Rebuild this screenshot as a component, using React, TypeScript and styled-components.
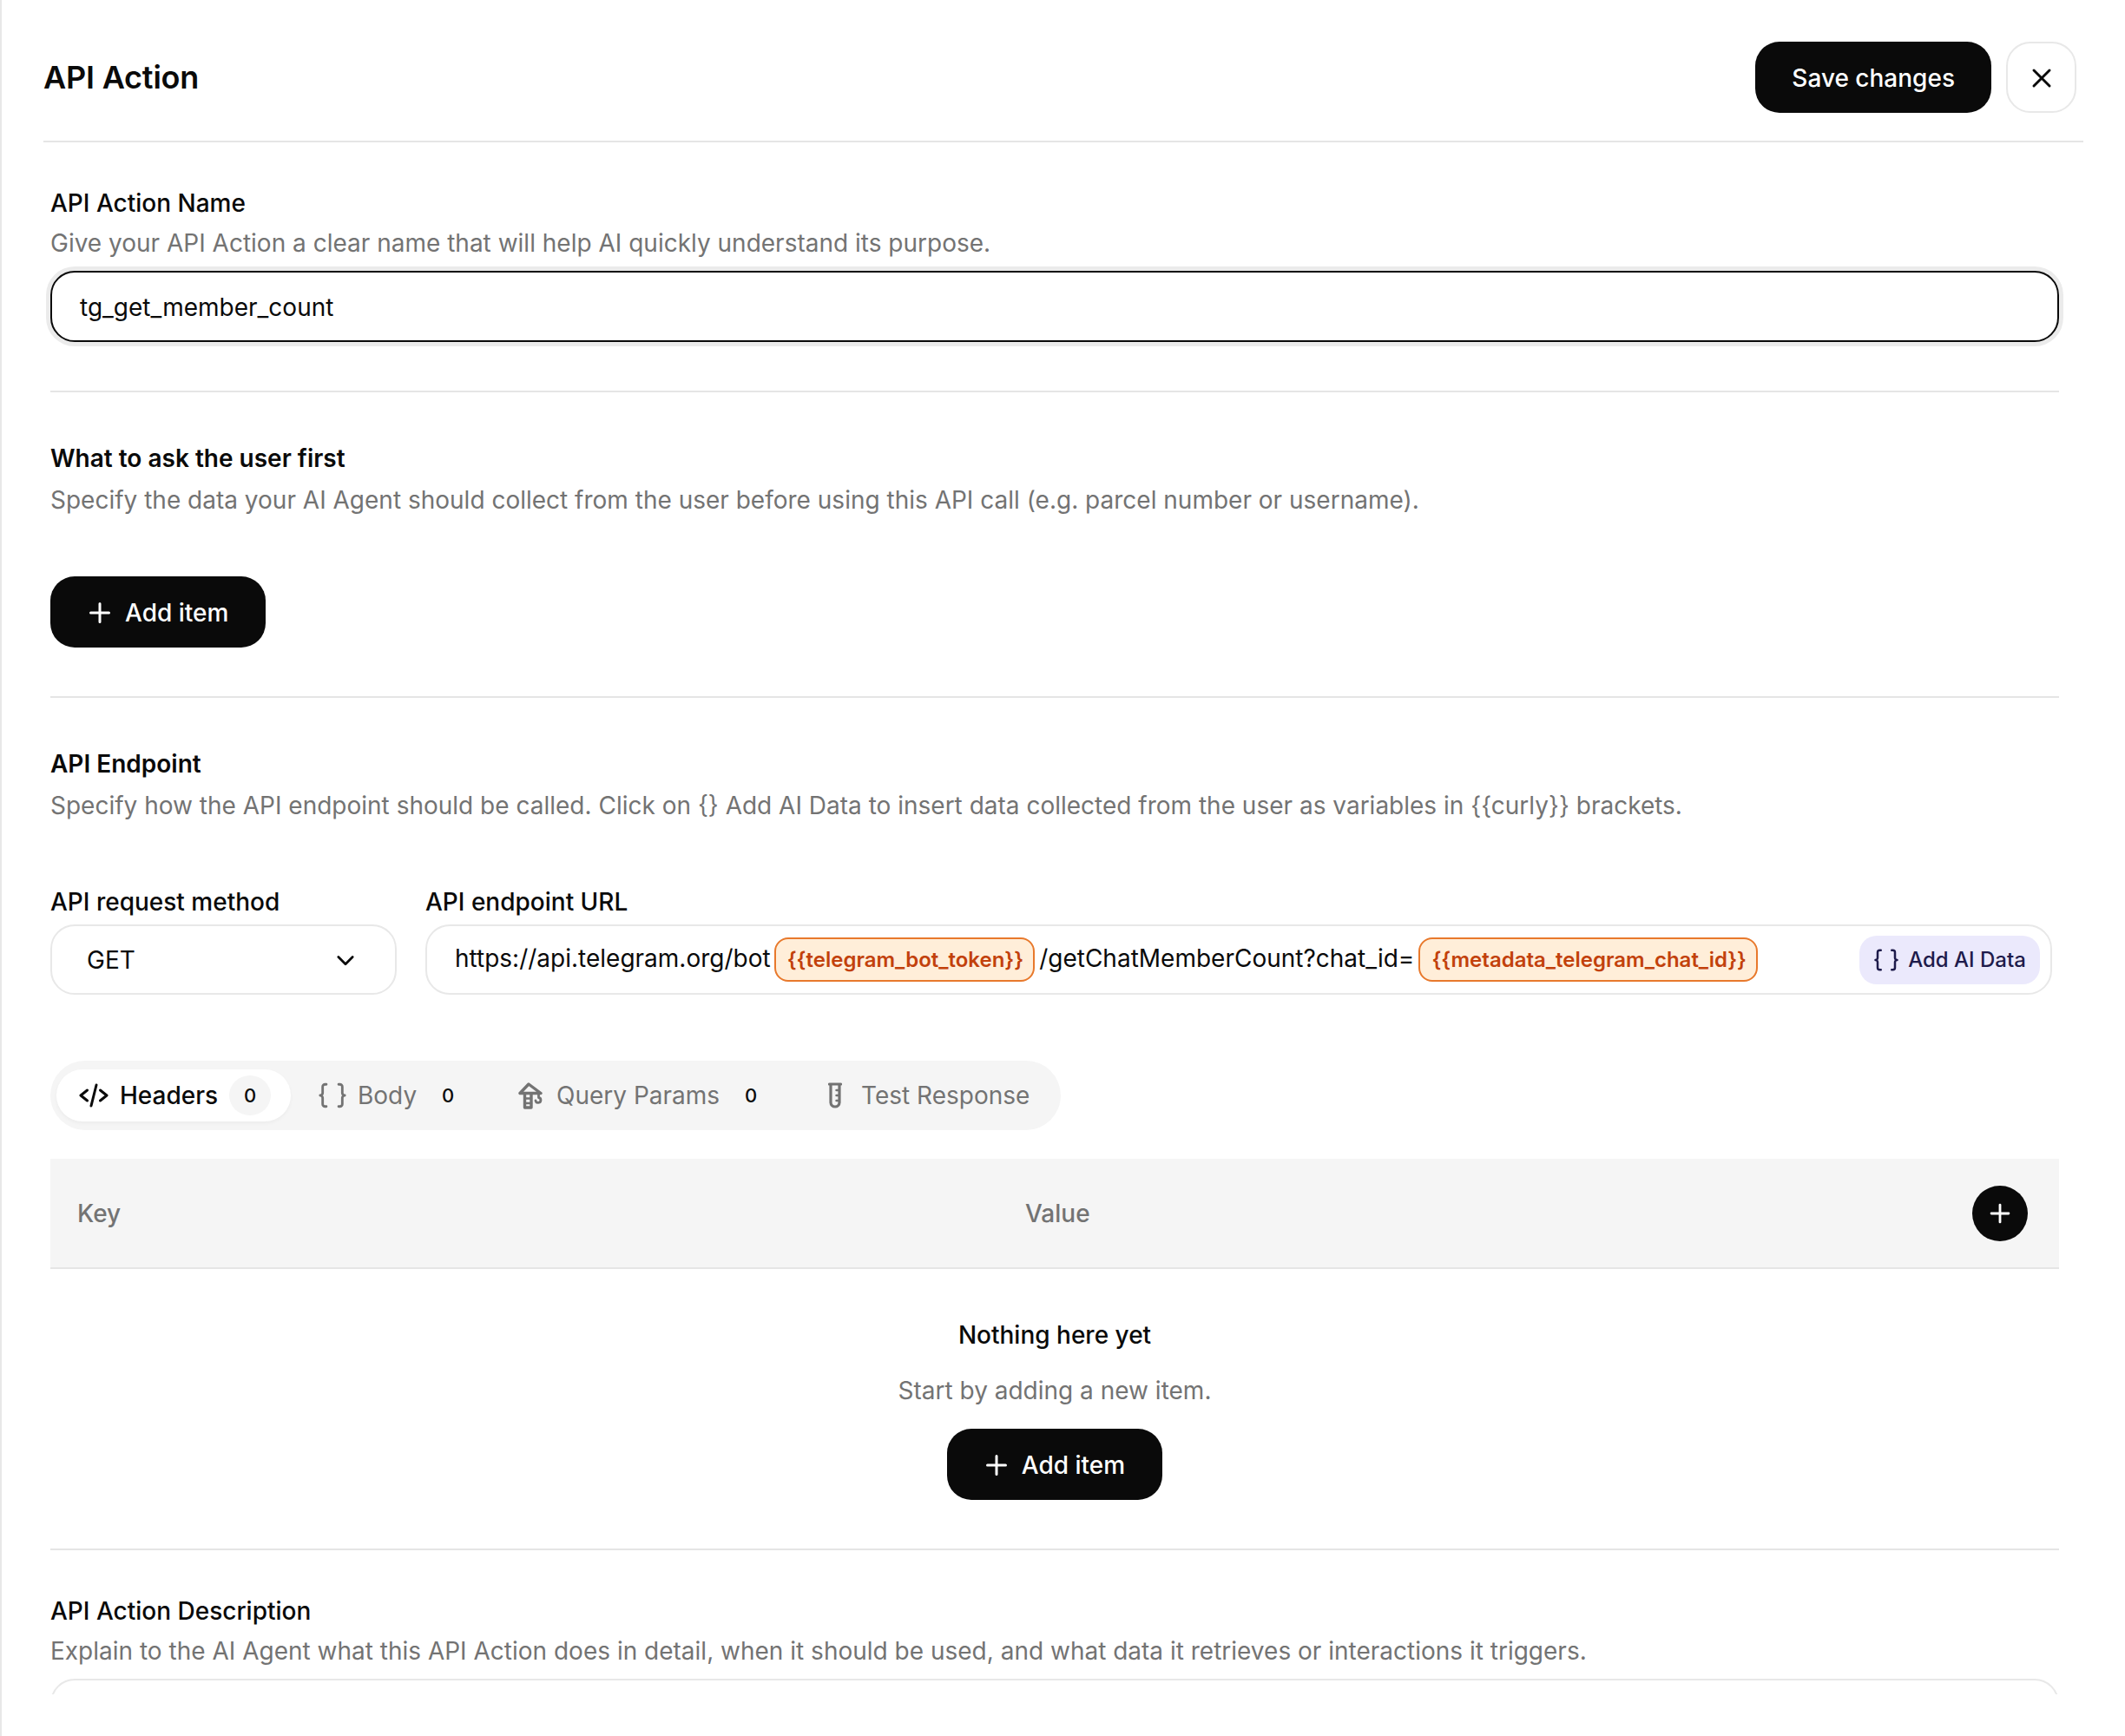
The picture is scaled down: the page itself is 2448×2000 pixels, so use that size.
import React from "react";
import styled, { createGlobalStyle } from "styled-components";

const Global = createGlobalStyle`
  html, body { margin: 0; padding: 0; background: #fff; }
  body { font-family: Inter, "Liberation Sans", sans-serif; color: #0a0a0a; -webkit-font-smoothing: antialiased; }
  * { box-sizing: border-box; }
`;

const Panel = styled.div`
  height: 2000px;
  border-left: 2px solid #e8e8e8;
  padding-right: 48px;
  padding-left: 48px;
  background: #fff;
`;

const Header = styled.header`
  height: 164px;
  padding: 48px 8px 0 0;
  display: flex;
  align-items: flex-start;
  justify-content: space-between;
  border-bottom: 2px solid #e5e5e5;
`;

const Title = styled.h1`
  margin: 0;
  height: 82px;
  line-height: 82px;
  font-size: 36px;
  font-weight: 600;
  letter-spacing: -0.2px;
`;

const Actions = styled.div`
  display: flex;
  gap: 17px;
`;

const PrimaryButton = styled.button`
  height: 82px;
  padding: 2px 42px 0;
  display: inline-flex;
  align-items: center;
  border: 0;
  border-radius: 28px;
  background: #0a0a0a;
  color: #fff;
  font: 500 28px Inter, sans-serif;
`;

const AddButton = styled(PrimaryButton)`
  padding: 2px 43px 0 39px;
  gap: 11px;
`;

const CloseButton = styled.button`
  width: 81px;
  height: 82px;
  display: flex;
  align-items: center;
  justify-content: center;
  border: 2px solid #e8e8e8;
  border-radius: 28px;
  background: #fff;
  color: #0a0a0a;
  padding: 2px 0 0;
`;

const Scroll = styled.main`
  height: 1788px;
  overflow: hidden;
  padding: 0 28px 0 8px;
`;

const Section = styled.section<{ $last?: boolean; $h: number; $pt: number }>`
  border-bottom: ${(p) => (p.$last ? "0" : "2px solid #e5e5e5")};
  height: ${(p) => p.$h}px;
  padding-top: ${(p) => p.$pt}px;
`;

const FieldLabel = styled.div`
  font-size: 28px;
  line-height: 46px;
  font-weight: 500;
  color: #0a0a0a;
`;

const StrongLabel = styled(FieldLabel)`
  font-weight: 600;
`;

const Hint = styled.div`
  font-size: 28px;
  line-height: 46px;
  font-weight: 400;
  color: #737373;
`;

const StrongHint = styled(Hint)`
  margin-top: 2px;
`;

const NameInput = styled.div`
  height: 82px;
  margin-top: 9px;
  display: flex;
  align-items: center;
  padding: 2px 32px 0;
  border: 2.5px solid #0a0a0a;
  border-radius: 28px;
  box-shadow: 0 0 0 5px #ebebeb;
  font-size: 28px;
  background: #fff;
`;

const ButtonRow = styled.div`
  margin-top: 65px;
`;

const EndpointRow = styled.div`
  display: flex;
  gap: 33px;
  margin-top: 66px;
`;

const MethodColumn = styled.div`
  width: 399px;
  flex: none;
`;

const UrlColumn = styled.div`
  width: 1874px;
  flex: none;
`;

const SmallLabel = styled(FieldLabel)`
  line-height: 44px;
  margin-bottom: 4px;
`;

const Select = styled.div`
  height: 81px;
  display: flex;
  align-items: center;
  justify-content: space-between;
  padding: 0 43px 0 40px;
  border: 2px solid #e8e8e8;
  border-radius: 28px;
  font-size: 28px;
  background: #fff;
`;

const UrlField = styled.div`
  height: 81px;
  display: flex;
  align-items: center;
  padding: 0 12px 0 32px;
  border: 2px solid #e8e8e8;
  border-radius: 28px;
  font-size: 28px;
  line-height: 1;
  background: #fff;
`;

const UrlText = styled.span`
  margin-top: -4px;
  white-space: nowrap;
`;

const Chip = styled.span<{ $left: number; $right: number }>`
  height: 51px;
  display: inline-flex;
  align-items: center;
  padding: 0 11px 0 13px;
  margin: 0 ${(p) => p.$right}px 0 ${(p) => p.$left}px;
  border: 2.5px solid #e8792c;
  border-radius: 16px;
  background: #ffeed9;
  color: #c2410c;
  font-size: 24px;
  font-weight: 600;
  white-space: nowrap;
`;

const AiButton = styled.button`
  margin-left: auto;
  height: 56px;
  width: 208px;
  display: inline-flex;
  align-items: center;
  justify-content: center;
  gap: 10px;
  border: 0;
  padding: 0;
  border-radius: 20px;
  background: #ebe9fc;
  color: #1e1b4b;
  font: 500 24px Inter, sans-serif;
  white-space: nowrap;
`;

const TabBar = styled.div`
  width: 1164px;
  height: 80px;
  margin-top: 76px;
  padding: 10px 7px;
  display: flex;
  align-items: center;
  border-radius: 40px;
  background: #f5f5f5;
`;

const Tab = styled.div<{ $active?: boolean; $w: number; $pl: number }>`
  width: ${(p) => p.$w}px;
  height: 60px;
  flex: none;
  display: flex;
  align-items: center;
  padding-left: ${(p) => p.$pl}px;
  border-radius: 30px;
  font-size: 28px;
  font-weight: ${(p) => (p.$active ? 500 : 400)};
  color: ${(p) => (p.$active ? "#0a0a0a" : "#737373")};
  background: ${(p) => (p.$active ? "#fff" : "transparent")};
  box-shadow: ${(p) => (p.$active ? "0 2px 4px rgba(0,0,0,.04)" : "none")};
`;

const TabIcon = styled.span<{ $gap: number }>`
  display: flex;
  margin-right: ${(p) => p.$gap}px;
`;

const Count = styled.span<{ $active?: boolean; $ml: number }>`
  width: 48px;
  height: 46px;
  margin-left: ${(p) => p.$ml}px;
  flex: none;
  display: flex;
  align-items: center;
  justify-content: center;
  border-radius: 50%;
  background: ${(p) => (p.$active ? "#f5f5f5" : "transparent")};
  color: #0a0a0a;
  font-size: 22px;
  font-weight: 500;
`;

const TableHead = styled.div`
  height: 127px;
  margin-top: 33px;
  display: grid;
  grid-template-columns: 1092px 1fr 64px;
  align-items: center;
  padding: 0 36px 0 31px;
  background: #f5f5f5;
  border-bottom: 2px solid #e5e5e5;
  color: #737373;
  font-size: 28px;
  font-weight: 500;
`;

const RoundAdd = styled.button`
  width: 64px;
  height: 64px;
  display: flex;
  align-items: center;
  justify-content: center;
  border: 0;
  padding: 0;
  border-radius: 50%;
  background: #0a0a0a;
  color: #fff;
`;

const Empty = styled.div`
  display: flex;
  flex-direction: column;
  align-items: center;
  padding-top: 53px;
`;

const EmptyTitle = styled(FieldLabel)``;

const EmptyHint = styled(Hint)`
  margin-top: 18px;
  margin-bottom: 21px;
`;

const TextArea = styled.div`
  height: 200px;
  margin-top: 9px;
  border: 2px solid #e8e8e8;
  border-radius: 28px;
  background: #fff;
`;

const Plus = ({ size }: { size: number }) => (
  <svg width={size} height={size} viewBox="0 0 24 24" fill="none" stroke="currentColor" strokeWidth="2" strokeLinecap="round">
    <path d="M5 12h14M12 5v14" />
  </svg>
);

const Cross = () => (
  <svg width="36" height="36" viewBox="0 0 24 24" fill="none" stroke="currentColor" strokeWidth="2" strokeLinecap="round">
    <path d="M18 6 6 18M6 6l12 12" />
  </svg>
);

const Chevron = () => (
  <svg width="28" height="28" viewBox="0 0 24 24" fill="none" stroke="currentColor" strokeWidth="2.4" strokeLinecap="round" strokeLinejoin="round">
    <path d="m5 9 7 7 7-7" />
  </svg>
);

const CodeIcon = () => (
  <svg width="36" height="36" viewBox="0 0 24 24" fill="none" stroke="currentColor" strokeWidth="2" strokeLinecap="round" strokeLinejoin="round">
    <path d="M7 8l-5 4 5 4M17 8l5 4-5 4M14 4l-4 16" />
  </svg>
);

const BracesIcon = ({ size = 34 }: { size?: number }) => (
  <svg width={size} height={size} viewBox="0 0 24 24" fill="none" stroke="currentColor" strokeWidth="2" strokeLinecap="round" strokeLinejoin="round">
    <path d="M7 3H6a2 2 0 0 0-2 2v5c0 1.1-1 2-2 2 1 0 2 .9 2 2v5a2 2 0 0 0 2 2h1M17 3h1a2 2 0 0 1 2 2v5c0 1.1 1 2 2 2-1 0-2 .9-2 2v5a2 2 0 0 1-2 2h-1" />
  </svg>
);

const CraneIcon = () => (
  <svg width="28" height="31" viewBox="0 0 28 31" fill="none" stroke="currentColor" strokeWidth="3.4" strokeLinecap="round" strokeLinejoin="round">
    <path d="M2 12.5 12 2l14 10.5H2" />
    <path d="M7.5 13v16h7.5V13" />
    <path d="M7.5 18.5h7.5M7.5 24h7.5" strokeWidth="2.4" />
    <path d="M23.5 13v4.5a3 3 0 1 1-3.5 3.5" strokeWidth="2.8" />
  </svg>
);

const TubeIcon = () => (
  <svg width="16" height="30" viewBox="0 0 16 30" fill="none" stroke="currentColor" strokeWidth="3.2" strokeLinecap="round" strokeLinejoin="round">
    <path d="M1.5 2h13M3 2v21a5 5 0 0 0 10 0V2" />
    <path d="M9.5 9h3M9.5 15h3M9.5 21h3" strokeWidth="2.4" />
  </svg>
);

export default function App() {
  return (
    <>
      <Global />
      <Panel>
        <Header>
          <Title>API Action</Title>
          <Actions>
            <PrimaryButton>Save changes</PrimaryButton>
            <CloseButton aria-label="Close">
              <Cross />
            </CloseButton>
          </Actions>
        </Header>
        <Scroll>
          <Section $h={288} $pt={47}>
            <FieldLabel>API Action Name</FieldLabel>
            <Hint>Give your API Action a clear name that will help AI quickly understand its purpose.</Hint>
            <NameInput>tg_get_member_count</NameInput>
          </Section>
          <Section $h={352} $pt={53}>
            <StrongLabel>What to ask the user first</StrongLabel>
            <StrongHint>Specify the data your AI Agent should collect from the user before using this API call (e.g. parcel number or username).</StrongHint>
            <ButtonRow>
              <AddButton>
                <Plus size={36} /> Add item
              </AddButton>
            </ButtonRow>
          </Section>
          <Section $h={982} $pt={53}>
            <StrongLabel>API Endpoint</StrongLabel>
            <StrongHint>Specify how the API endpoint should be called. Click on {"{}"} Add AI Data to insert data collected from the user as variables in {"{{curly}}"} brackets.</StrongHint>
            <EndpointRow>
              <MethodColumn>
                <SmallLabel>API request method</SmallLabel>
                <Select>
                  GET
                  <Chevron />
                </Select>
              </MethodColumn>
              <UrlColumn>
                <SmallLabel>API endpoint URL</SmallLabel>
                <UrlField>
                  <UrlText>https://api.telegram.org/bot</UrlText>
                  <Chip $left={4} $right={5}>{"{{telegram_bot_token}}"}</Chip>
                  <UrlText>/getChatMemberCount?chat_id=</UrlText>
                  <Chip $left={5} $right={0}>{"{{metadata_telegram_chat_id}}"}</Chip>
                  <AiButton>
                    <BracesIcon size={30} /> Add AI Data
                  </AiButton>
                </UrlField>
              </UrlColumn>
            </EndpointRow>
            <TabBar>
              <Tab $active $w={270} $pl={25}>
                <TabIcon $gap={12}>
                  <CodeIcon />
                </TabIcon>
                Headers
                <Count $active $ml={13}>0</Count>
              </Tab>
              <Tab $w={230} $pl={31}>
                <TabIcon $gap={12}>
                  <BracesIcon />
                </TabIcon>
                Body
                <Count $ml={12}>0</Count>
              </Tab>
              <Tab $w={354} $pl={32}>
                <TabIcon $gap={16}>
                  <CraneIcon />
                </TabIcon>
                Query Params
                <Count $ml={12}>0</Count>
              </Tab>
              <Tab $w={290} $pl={35}>
                <TabIcon $gap={22}>
                  <TubeIcon />
                </TabIcon>
                Test Response
              </Tab>
            </TabBar>
            <TableHead>
              <span>Key</span>
              <span>Value</span>
              <RoundAdd aria-label="Add header">
                <Plus size={34} />
              </RoundAdd>
            </TableHead>
            <Empty>
              <EmptyTitle>Nothing here yet</EmptyTitle>
              <EmptyHint>Start by adding a new item.</EmptyHint>
              <AddButton>
                <Plus size={36} /> Add item
              </AddButton>
            </Empty>
          </Section>
          <Section $last $h={300} $pt={47}>
            <FieldLabel>API Action Description</FieldLabel>
            <Hint>Explain to the AI Agent what this API Action does in detail, when it should be used, and what data it retrieves or interactions it triggers.</Hint>
            <TextArea />
          </Section>
        </Scroll>
      </Panel>
    </>
  );
}
